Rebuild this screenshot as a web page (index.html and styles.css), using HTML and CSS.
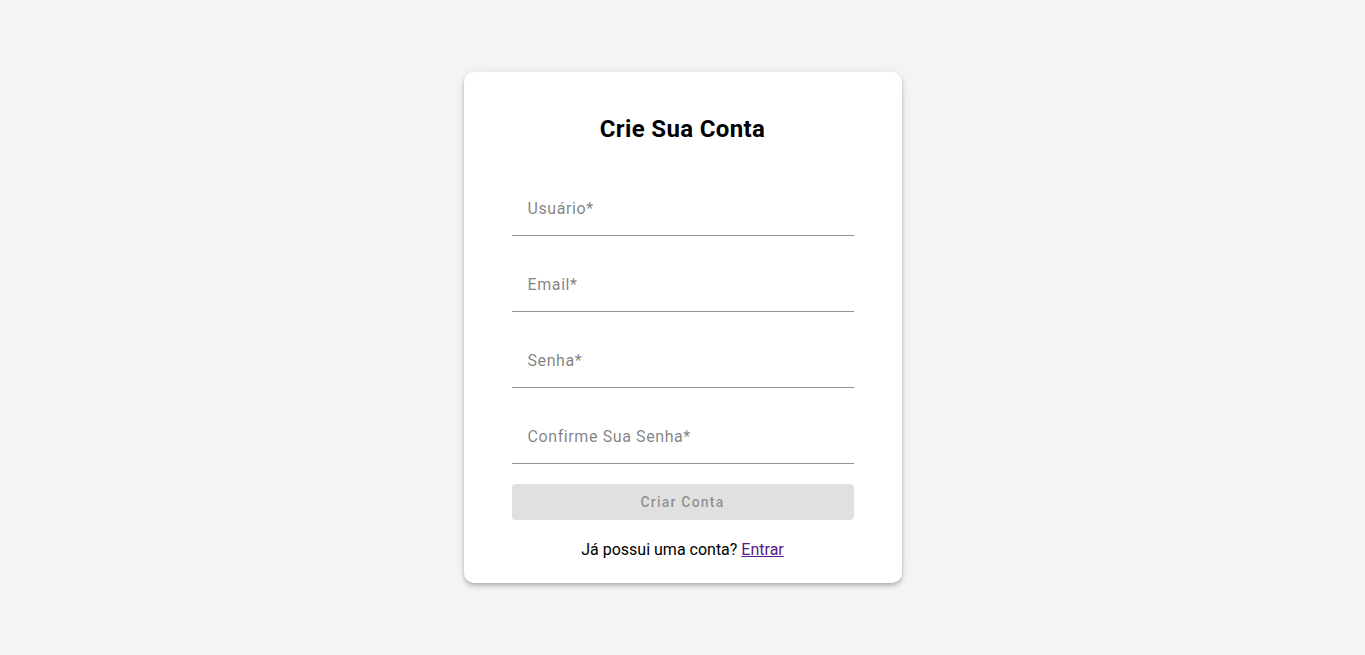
FILE: index.html
```html
<!DOCTYPE html>
<html lang="pt-BR">
<head>
<meta charset="utf-8">
<title>Crie Sua Conta</title>
<link rel="stylesheet" href="styles.css">
</head>
<body>
<main class="page">
  <form class="card">
    <h2 class="title">Crie Sua Conta</h2>
    <div class="fields">
      <label class="field"><span class="label">Usuário*</span></label>
      <label class="field"><span class="label">Email*</span></label>
      <label class="field"><span class="label">Senha*</span></label>
      <label class="field"><span class="label">Confirme Sua Senha*</span></label>
    </div>
    <button type="button" class="submit" disabled>Criar Conta</button>
    <p class="footer">Já possui uma conta? <a href="#" class="link">Entrar</a></p>
  </form>
</main>
</body>
</html>
```

FILE: styles.css
```css
* { box-sizing: border-box; }
html, body { margin: 0; padding: 0; }
body {
  background: #f4f4f4;
  font-family: Roboto, "Liberation Sans", sans-serif;
  color: #000;
}
.page {
  min-height: 100vh;
  display: flex;
  align-items: center;
  justify-content: center;
}
.card {
  width: 438px;
  background: #fff;
  border-radius: 10px;
  box-shadow: 0 2px 4px -1px rgba(0,0,0,0.2), 0 4px 5px 0 rgba(0,0,0,0.1), 0 1px 10px 0 rgba(0,0,0,0.08);
  padding: 43px 48px 21px;
  display: flex;
  flex-direction: column;
}
.title {
  margin: 0;
  text-align: center;
  font-size: 24px;
  font-weight: 700;
  line-height: 1.2;
  letter-spacing: 0.35px;
}
.fields {
  margin-top: 36px;
  display: flex;
  flex-direction: column;
  gap: 20px;
}
.field {
  display: block;
  height: 56px;
  border-bottom: 1px solid rgba(0,0,0,0.42);
  padding: 17px 16px 0;
}
.label {
  display: block;
  font-size: 16px;
  line-height: 24px;
  color: rgba(0,0,0,0.5);
  letter-spacing: 0.6px;
}
.submit {
  margin-top: 20px;
  height: 36px;
  border: 0;
  border-radius: 4px;
  background: #e0e0e0;
  color: rgba(0,0,0,0.38);
  font-family: Roboto, "Liberation Sans", sans-serif;
  font-size: 14px;
  font-weight: 500;
  letter-spacing: 1.2px;
}
.footer {
  margin: 18px 0 0;
  text-align: center;
  font-size: 16px;
  line-height: 24px;
}
.link {
  color: #551a8b;
  text-decoration: underline;
}
```
